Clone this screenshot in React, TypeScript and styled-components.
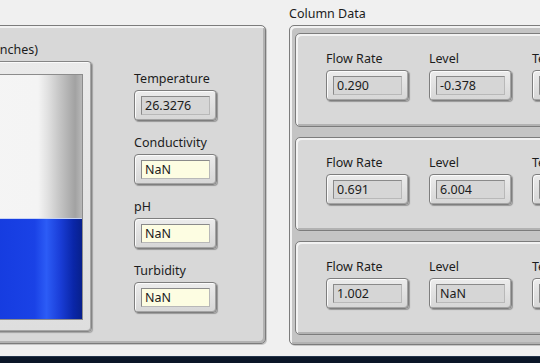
import React from "react";
import styled, {createGlobalStyle} from "styled-components";

const GlobalStyle = createGlobalStyle`
    html, body {
        margin: 0;
        padding: 0;
        background: #f0f0f0;
        overflow: hidden;
    }
    body {
        font-family: "Noto Sans", "DejaVu Sans", sans-serif;
        font-size: 12.5px;
        color: #1c1c1c;
    }
`

const Screen = styled.div`
    width: 540px;
    height: 363px;
    overflow: hidden;
    display: flex;
    flex-direction: column;
    background: #f0f0f0;
`

const Front = styled.div`
    height: 356px;
    flex-shrink: 0;
    display: flex;
    align-items: flex-start;
    & > * {
        flex-shrink: 0;
    }
`

const TaskBar = styled.div`
    height: 7px;
    flex-shrink: 0;
    background: #0a1628;
    border-top: 1px solid #24344a;
`

const Label = styled.div`
    line-height: 16px;
    height: 16px;
    white-space: nowrap;
`

// raised silver decoration
const RaisedBox = styled.div`
    box-sizing: border-box;
    flex-shrink: 0;
    border: 1px solid #7c7c7c;
    border-radius: 5px;
    background: #d8d8d8;
    box-shadow: inset 2px 2px 0 #f2f2f2, inset -2px -2px 0 #b2b2b2, 1px 1px 0 #c6c6c6;
`

const LeftPanel = styled(RaisedBox)`
    margin-top: 25px;
    margin-left: -140px;
    width: 406px;
    height: 319px;
    padding: 16px 0 0 30px;
    display: flex;
    gap: 42px;
`

const TankColumn = styled.div`
    width: 201px;
    flex-shrink: 0;
    display: flex;
    flex-direction: column;
    gap: 3px;
`

const TankCaption = styled(Label)`
    text-align: right;
    width: 147px;
`

const TankFrame = styled.div`
    box-sizing: border-box;
    height: 271px;
    padding: 12px 8px 11px 20px;
    border: 1px solid #858585;
    border-radius: 4px;
    background: linear-gradient(180deg, #eaeaea, #dedede);
    box-shadow: inset 1px 1px 0 #fafafa, inset -1px -1px 0 #a6a6a6, 1px 1px 1px rgba(0, 0, 0, 0.25);
`

const TankWell = styled.div`
    height: 100%;
    box-sizing: border-box;
    border: 1px solid #8c8c8c;
    display: flex;
    flex-direction: column;
`

const TankEmpty = styled.div`
    flex: 1;
    background: linear-gradient(90deg, #f6f6f6 0%, #f4f4f4 74%, #e0e0e0 80%, #c4c4c4 87%, #a2a2a2 96%, #b8b8b8 100%);
`

const TankFill = styled.div`
    border-top: 1px solid #c8d4f4;
    background: linear-gradient(90deg, #0c2fd2 0%, #1a42e6 72%, #2c5cf6 79%, #1a3ed8 87%, #0a26a8 95%, #08208c 100%);
`

const IndicatorColumn = styled.div`
    padding-top: 29px;
    flex-shrink: 0;
    display: flex;
    flex-direction: column;
    gap: 14px;
`

const Indicator = styled.div`
    flex-shrink: 0;
    display: flex;
    flex-direction: column;
    gap: 3px;
`

const NumFrame = styled.div`
    box-sizing: border-box;
    width: 83px;
    height: 31px;
    padding: 5px 6px;
    border: 1px solid #7e7e7e;
    border-radius: 4px;
    background: linear-gradient(180deg, #ececec, #d6d6d6);
    box-shadow: inset 1px 1px 0 #fbfbfb, inset -1px -1px 0 #a4a4a4, 1px 1px 1px rgba(0, 0, 0, 0.3);
`

const NumField = styled.div<{ $warn?: boolean }>`
    box-sizing: border-box;
    height: 19px;
    padding-left: 3px;
    line-height: 17px;
    border: 1px solid #8a8a8a;
    border-right-color: #b8b8b8;
    border-bottom-color: #b8b8b8;
    background: ${p => (p.$warn ? "#fdfde2" : "#d6d6d6")};
    white-space: nowrap;
    overflow: hidden;
`

const RightColumn = styled.div`
    margin-left: 23px;
    padding-top: 6px;
    display: flex;
    flex-direction: column;
    gap: 3px;
`

const ClusterBox = styled(RaisedBox)`
    width: 300px;
    height: 320px;
    background: #c4c4c4;
    padding: 7px 0 0 5px;
    display: flex;
    flex-direction: column;
    gap: 10px;
`

const ColumnRow = styled(RaisedBox)`
    height: 94px;
    padding: 17px 0 0 30px;
    display: flex;
    gap: 20px;
`

function NumericIndicator({label, value, warn}: { label: string; value: string; warn?: boolean }) {
    return (
        <Indicator>
            <Label>{label}</Label>
            <NumFrame>
                <NumField $warn={warn}>{value}</NumField>
            </NumFrame>
        </Indicator>
    )
}

const columns = [
    {flow: "0.290", level: "-0.378", temp: "NaN"},
    {flow: "0.691", level: "6.004", temp: "NaN"},
    {flow: "1.002", level: "NaN", temp: "NaN"},
]

export default function App() {
    const level = 41
    return (
        <Screen>
            <GlobalStyle/>
            <Front>
                <LeftPanel>
                    <TankColumn>
                        <TankCaption>Level (inches)</TankCaption>
                        <TankFrame>
                            <TankWell>
                                <TankEmpty/>
                                <TankFill style={{height: `${level}%`}}/>
                            </TankWell>
                        </TankFrame>
                    </TankColumn>
                    <IndicatorColumn>
                        <NumericIndicator label="Temperature" value="26.3276"/>
                        <NumericIndicator label="Conductivity" value="NaN" warn/>
                        <NumericIndicator label="pH" value="NaN" warn/>
                        <NumericIndicator label="Turbidity" value="NaN" warn/>
                    </IndicatorColumn>
                </LeftPanel>
                <RightColumn>
                    <Label>Column Data</Label>
                    <ClusterBox>
                        {columns.map((c, i) => (
                            <ColumnRow key={i}>
                                <NumericIndicator label="Flow Rate" value={c.flow}/>
                                <NumericIndicator label="Level" value={c.level}/>
                                <NumericIndicator label="Temperature" value={c.temp}/>
                            </ColumnRow>
                        ))}
                    </ClusterBox>
                </RightColumn>
            </Front>
            <TaskBar/>
        </Screen>
    )
}
